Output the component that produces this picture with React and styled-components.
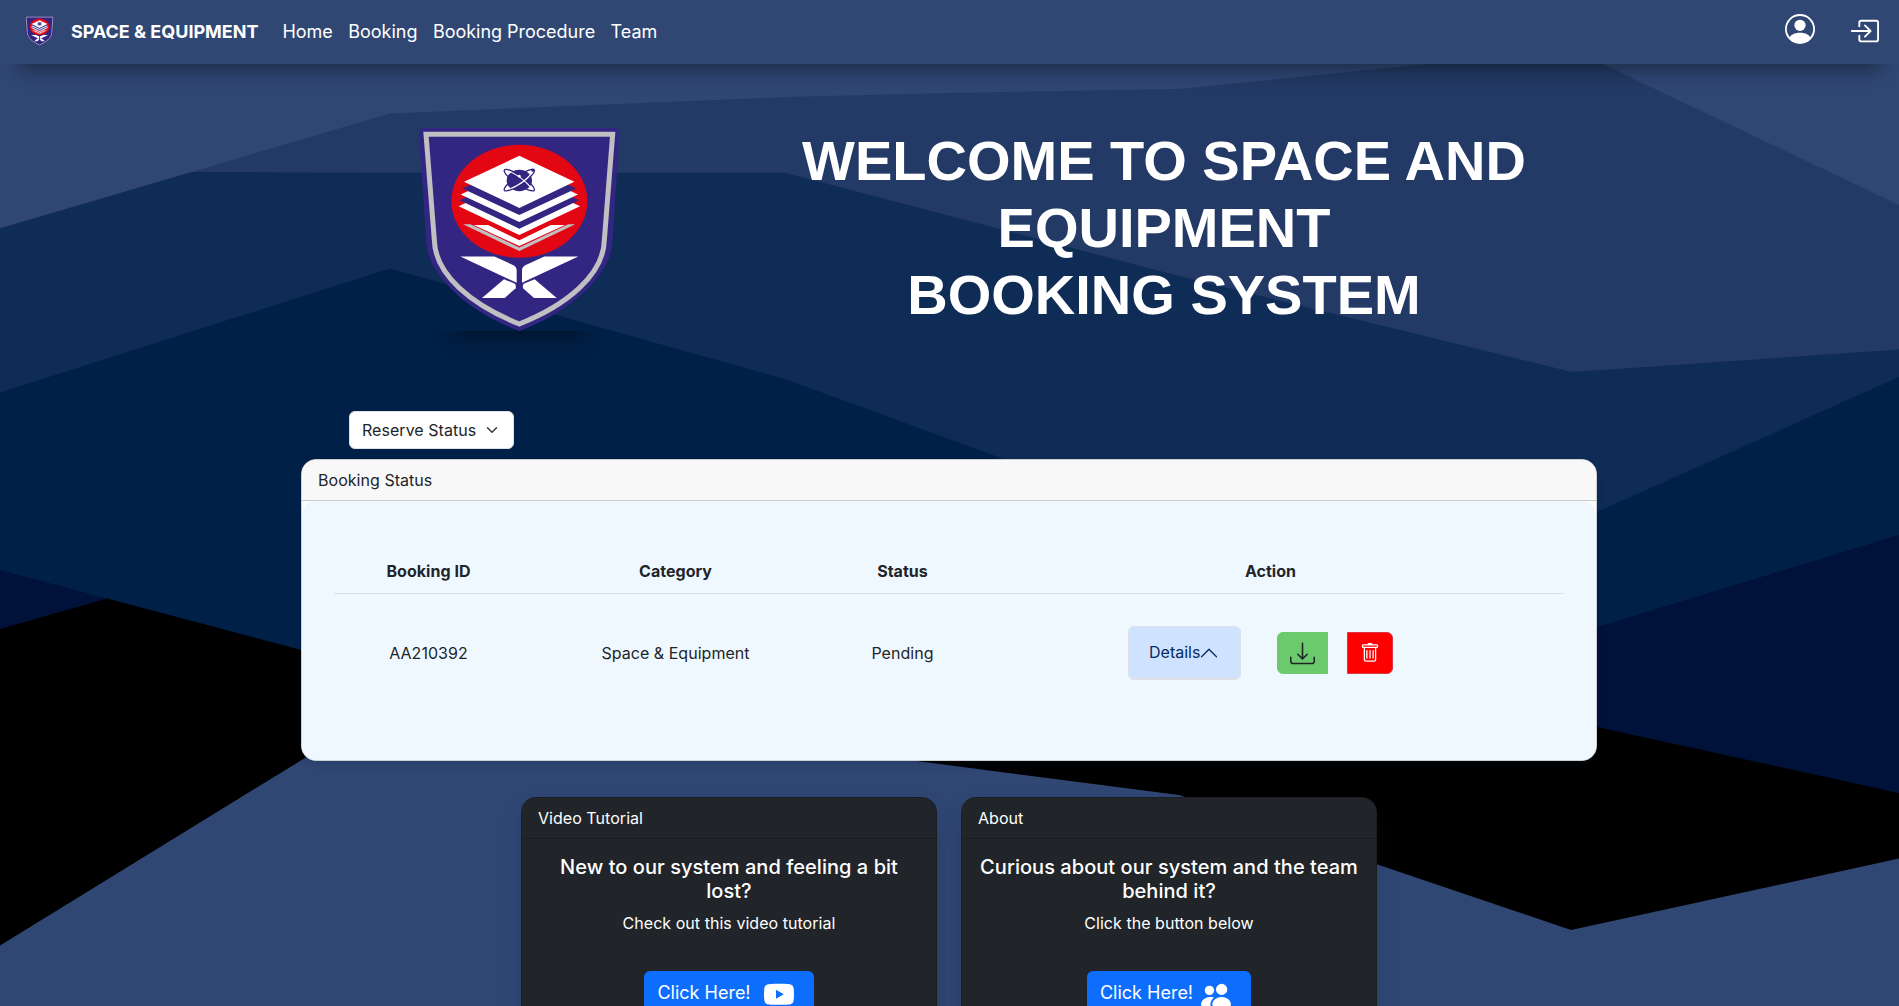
import React from 'react';
import styled, { createGlobalStyle } from 'styled-components';
import {
  BsPersonCircle,
  BsBoxArrowInRight,
  BsChevronUp,
  BsDownload,
  BsTrash,
  BsYoutube,
  BsPeopleFill,
} from 'react-icons/bs';

const GlobalStyle = createGlobalStyle`
  *, *::before, *::after { box-sizing: border-box; }
  body {
    margin: 0;
    overflow: hidden;
    background: #304774;
    color: #212529;
    font-family: Inter, "Liberation Sans", sans-serif;
    font-size: 16px;
    line-height: 1.5;
    letter-spacing: 0.04px;
  }
  svg { display: block; flex: none; }
`;

const Page = styled.div`
  position: relative;
  height: 1006px;
  overflow: hidden;
  isolation: isolate;
`;

const Backdrop = styled.svg`
  position: absolute;
  inset: 0;
  z-index: -1;
`;

const Navbar = styled.nav`
  display: flex;
  align-items: center;
  height: 64px;
  padding: 0 20px 2px 25px;
  background: #304774;
  color: #fff;
  font-size: 18px;
  letter-spacing: -0.02px;
  box-shadow: rgba(0, 0, 0, 0.45) 0 25px 20px -20px;
`;

const Brand = styled.a`
  display: flex;
  align-items: center;
  gap: 17px;
  margin-right: 24px;
  font-weight: 700;
`;

const NavLinks = styled.div`
  display: flex;
  flex: 1;
  gap: 15.5px;
`;

const NavIcons = styled.div`
  display: flex;
  align-items: flex-start;
  gap: 34px;
  padding-bottom: 3px;
`;

const IconLink = styled.a`
  padding-top: ${(p) => p.$drop || 0}px;
`;

const Hero = styled.header`
  display: flex;
  align-items: flex-start;
  height: 347px;
  padding: 63px 0 0 418px;
`;

const HeroLogo = styled.div`
  width: 202px;
  height: 204px;
  box-shadow: rgba(0, 0, 0, 0.45) 0 42px 20px -37px;
`;

const HeroTitle = styled.h1`
  width: 800px;
  margin: 0 0 0 144px;
  color: #fff;
  font: 700 56px/67.2px "Liberation Sans", Arial, sans-serif;
  letter-spacing: 0;
  text-align: center;
`;

const Content = styled.main`
  width: 1296px;
  margin: 0 auto 0 301px;
`;

const Dropdown = styled.button`
  display: flex;
  align-items: center;
  gap: 10px;
  width: 165px;
  height: 38px;
  margin: 0 0 10px 48px;
  padding: 0 12px;
  border: 1px solid #dee2e6;
  border-radius: 6px;
  background: #fff;
  color: #212529;
  font: inherit;
  letter-spacing: inherit;
  white-space: nowrap;
`;

const StatusCard = styled.section`
  height: 302px;
  border: 1px solid #cdd0d3;
  border-radius: 15px;
  background: #fff;
  box-shadow: rgba(9, 30, 66, 0.25) 0 4px 8px -2px;
`;

const CardHeader = styled.div`
  height: 41px;
  padding: 8px 16px;
  border-bottom: 1px solid ${(p) => (p.$dark ? '#1b1e21' : '#c8c9cb')};
  border-radius: 14px 14px 0 0;
  background: ${(p) => (p.$dark ? '#212529' : '#f8f8f8')};
`;

const StatusBody = styled.div`
  height: 259px;
  padding: 52px 32px 0;
  border-radius: 14px;
  background: #f0f8ff;
`;

const TableRow = styled.div`
  display: grid;
  grid-template-columns: 189px 305px 149px 587px;
  align-items: center;
  height: ${(p) => (p.$head ? 41 : 118)}px;
  padding-bottom: ${(p) => (p.$head ? 4 : 0)}px;
  border-bottom: ${(p) => (p.$head ? '1px solid #dae1e8' : '0')};
  font-weight: ${(p) => (p.$head ? 700 : 400)};
  text-align: center;
`;

const Actions = styled.div`
  display: flex;
  align-items: center;
  justify-content: center;
  padding-right: 20px;
`;

const DetailsButton = styled.button`
  display: flex;
  align-items: center;
  width: 113px;
  height: 54px;
  margin-right: 36px;
  padding: 0 19px 2px 20px;
  border: 1px solid #dee2e6;
  border-radius: 6px;
  background: #cfe2ff;
  box-shadow: inset 0 -1px 0 #dee2e6;
  color: #052c65;
  font: inherit;
  white-space: nowrap;
`;

const DetailsCaret = styled(BsChevronUp)`
  margin: 2px 0 0 -1px;
`;

const ActionButton = styled.button`
  display: flex;
  align-items: center;
  justify-content: center;
  width: ${(p) => p.$width}px;
  height: 42px;
  margin-right: ${(p) => p.$gap || 0}px;
  padding: 0;
  border: 1px solid ${(p) => p.$border};
  border-radius: ${(p) => p.$radius};
  background: ${(p) => p.$fill};
  color: ${(p) => p.$ink};
`;

const InfoGrid = styled.div`
  display: flex;
  justify-content: center;
  gap: 24px;
  margin-top: 36px;
`;

const InfoCard = styled.section`
  width: 416px;
  height: 320px;
  border: 1px solid #1b1e21;
  border-radius: 15px;
  background: #212529;
  color: #fff;
  box-shadow: rgba(50, 50, 93, 0.25) 0 13px 27px -5px, rgba(0, 0, 0, 0.3) 0 8px 16px -8px;
`;

const InfoBody = styled.div`
  display: flex;
  flex-direction: column;
  align-items: center;
  padding: 16px 16px 0;
  text-align: center;
`;

const InfoTitle = styled.h5`
  margin: 0 0 8px;
  font-size: 20px;
  font-weight: 500;
  line-height: 24px;
`;

const InfoText = styled.p`
  margin: 0 0 36px;
`;

const PrimaryButton = styled.button`
  display: flex;
  align-items: flex-start;
  gap: ${(p) => p.$gap}px;
  height: 48px;
  padding: 8px 20px 0 13px;
  border: 0;
  border-radius: 6px;
  background: #0d6efd;
  color: #fff;
  font: 400 18px/27px Inter, sans-serif;
  white-space: nowrap;

  svg { margin-top: 1px; }
`;

const waves = [
  ['#233a66', '0,228 195,171 390,113.5 785,97 949,93 1179,89 1428,64 1572,49.5 1899,205 1899,1006 0,1006'],
  ['#0f2c56', '0,228.5 192,172 390,172.7 785,172.7 1179,276 1572,372 1899,349.5 1899,1006 0,1006'],
  ['#002047', '0,392.5 390,268.5 785,379 1179,523 1572,523 1899,377 1899,1006 0,1006'],
  ['#001239', '0,570 107,598.5 301,650 785,700 1597,627 1899,535 1899,1006 0,1006'],
  ['#000000', '0,629 107,598.5 301,650 1179,650 1597,727 1899,793 1899,1006 0,1006'],
  ['#304774', '0,945.5 305,758 390,706 785,744 1179,795 1379,865 1571,930 1899,858.5 1899,1006 0,1006'],
];

function Waves() {
  return (
    <Backdrop width="1899" height="1006" viewBox="0 0 1899 1006">
      {waves.map(([fill, points]) => (
        <polygon key={fill} fill={fill} points={points} />
      ))}
    </Backdrop>
  );
}

function SelectCaret() {
  return (
    <svg width="12" height="12" viewBox="0 0 16 16" fill="none">
      <path d="m2 5 6 6 6-6" stroke="#343a40" strokeWidth="2" strokeLinecap="round" strokeLinejoin="round" />
    </svg>
  );
}

function Crest({ width, height, id }) {
  const stand = (
    <g fill="#fff">
      <path d="M182 439H284L343 466Q351 471 351 479V518Z" />
      <path d="M313 507L346 521Q350 527 348 534L315 563H247Z" />
    </g>
  );
  return (
    <svg width={width} height={height} viewBox="55 52 606 610" preserveAspectRatio="none">
      <path
        fill="#332683"
        d="M68 55H650Q660 56 659 68L638 400C630 500 510 605 359 662C208 605 88 500 80 400L58 68Q58 56 68 55Z"
      />
      <path
        fill="none"
        stroke="#c0bfc1"
        strokeWidth="15"
        d="M79 73.5H639L614 390C612 495 500 585 359 641C218 585 106 495 104 390Z"
      />
      <ellipse cx="359" cy="274" rx="204" ry="169" fill="#e30613" />
      <path fill="#fff" d="M177 289L359 203L541 289L359 375Z" />
      <path fill="#332683" d="M180 271L359 186L538 271L359 356Z" />
      <path fill="#fff" d="M183 254L359 172L535 254L359 336Z" />
      <path fill="#332683" d="M188 236L359 157L530 236L359 315Z" />
      <path fill="#fff" d="M193 216L359 138L524 216L359 294Z" />
      <path fill="#fff" d="M222 345H265L359 391L453 345H496L359 408Z" />
      <path fill="#c0bfc1" d="M190 343H212L359 412L506 343H527L359 423Z" />
      <clipPath id={id}>
        <ellipse cx="359" cy="212" rx="38" ry="32" />
      </clipPath>
      <ellipse cx="359" cy="212" rx="38" ry="32" fill="#332683" />
      <g fill="none" stroke="#332683" strokeWidth="4">
        <ellipse cx="359" cy="211" rx="54" ry="13" transform="rotate(34 359 211)" />
        <ellipse cx="359" cy="211" rx="54" ry="13" transform="rotate(-34 359 211)" />
      </g>
      <g fill="none" stroke="#fff" strokeWidth="3.5" clipPath={`url(#${id})`}>
        <path d="M320 182Q362 194 398 238M400 184Q378 220 322 241" />
      </g>
      <circle cx="400" cy="181" r="5" fill="#332683" />
      <circle cx="359" cy="199" r="4" fill="#fff" />
      {stand}
      <g transform="translate(718 0) scale(-1 1)">{stand}</g>
    </svg>
  );
}

export default function App() {
  return (
    <>
      <GlobalStyle />
      <Page>
        <Waves />
        <Navbar>
          <Brand>
            <Crest width={29} height={30} id="crest-small" />
            SPACE &amp; EQUIPMENT
          </Brand>
          <NavLinks>
            <a>Home</a>
            <a>Booking</a>
            <a>Booking Procedure</a>
            <a>Team</a>
          </NavLinks>
          <NavIcons>
            <IconLink><BsPersonCircle size={30} /></IconLink>
            <IconLink $drop={2}><BsBoxArrowInRight size={30} /></IconLink>
          </NavIcons>
        </Navbar>
        <Hero>
          <HeroLogo><Crest width={202} height={204} id="crest-large" /></HeroLogo>
          <HeroTitle>
            WELCOME TO SPACE AND EQUIPMENT
            <br />
            BOOKING SYSTEM
          </HeroTitle>
        </Hero>
        <Content>
          <Dropdown>
            Reserve Status
            <SelectCaret />
          </Dropdown>
          <StatusCard>
            <CardHeader>Booking Status</CardHeader>
            <StatusBody>
              <TableRow $head>
                <span>Booking ID</span>
                <span>Category</span>
                <span>Status</span>
                <span>Action</span>
              </TableRow>
              <TableRow>
                <span>AA210392</span>
                <span>Space &amp; Equipment</span>
                <span>Pending</span>
                <Actions>
                  <DetailsButton>
                    Details
                    <DetailsCaret size={20} />
                  </DetailsButton>
                  <ActionButton $width={51} $gap={19} $radius="6px 0 0 6px" $fill="#6bca6b" $border="#6bca6b" $ink="#212529">
                    <BsDownload size={25} />
                  </ActionButton>
                  <ActionButton $width={46} $radius="0 6px 6px 0" $fill="#ff0000" $border="#dc3545" $ink="#fff">
                    <BsTrash size={20} />
                  </ActionButton>
                </Actions>
              </TableRow>
            </StatusBody>
          </StatusCard>
          <InfoGrid>
            <InfoCard>
              <CardHeader $dark>Video Tutorial</CardHeader>
              <InfoBody>
                <InfoTitle>New to our system and feeling a bit lost?</InfoTitle>
                <InfoText>Check out this video tutorial</InfoText>
                <PrimaryButton $gap={13}>
                  Click Here!
                  <BsYoutube size={30} />
                </PrimaryButton>
              </InfoBody>
            </InfoCard>
            <InfoCard>
              <CardHeader $dark>About</CardHeader>
              <InfoBody>
                <InfoTitle>Curious about our system and the team behind it?</InfoTitle>
                <InfoText>Click the button below</InfoText>
                <PrimaryButton $gap={8}>
                  Click Here!
                  <BsPeopleFill size={30} />
                </PrimaryButton>
              </InfoBody>
            </InfoCard>
          </InfoGrid>
        </Content>
      </Page>
    </>
  );
}
